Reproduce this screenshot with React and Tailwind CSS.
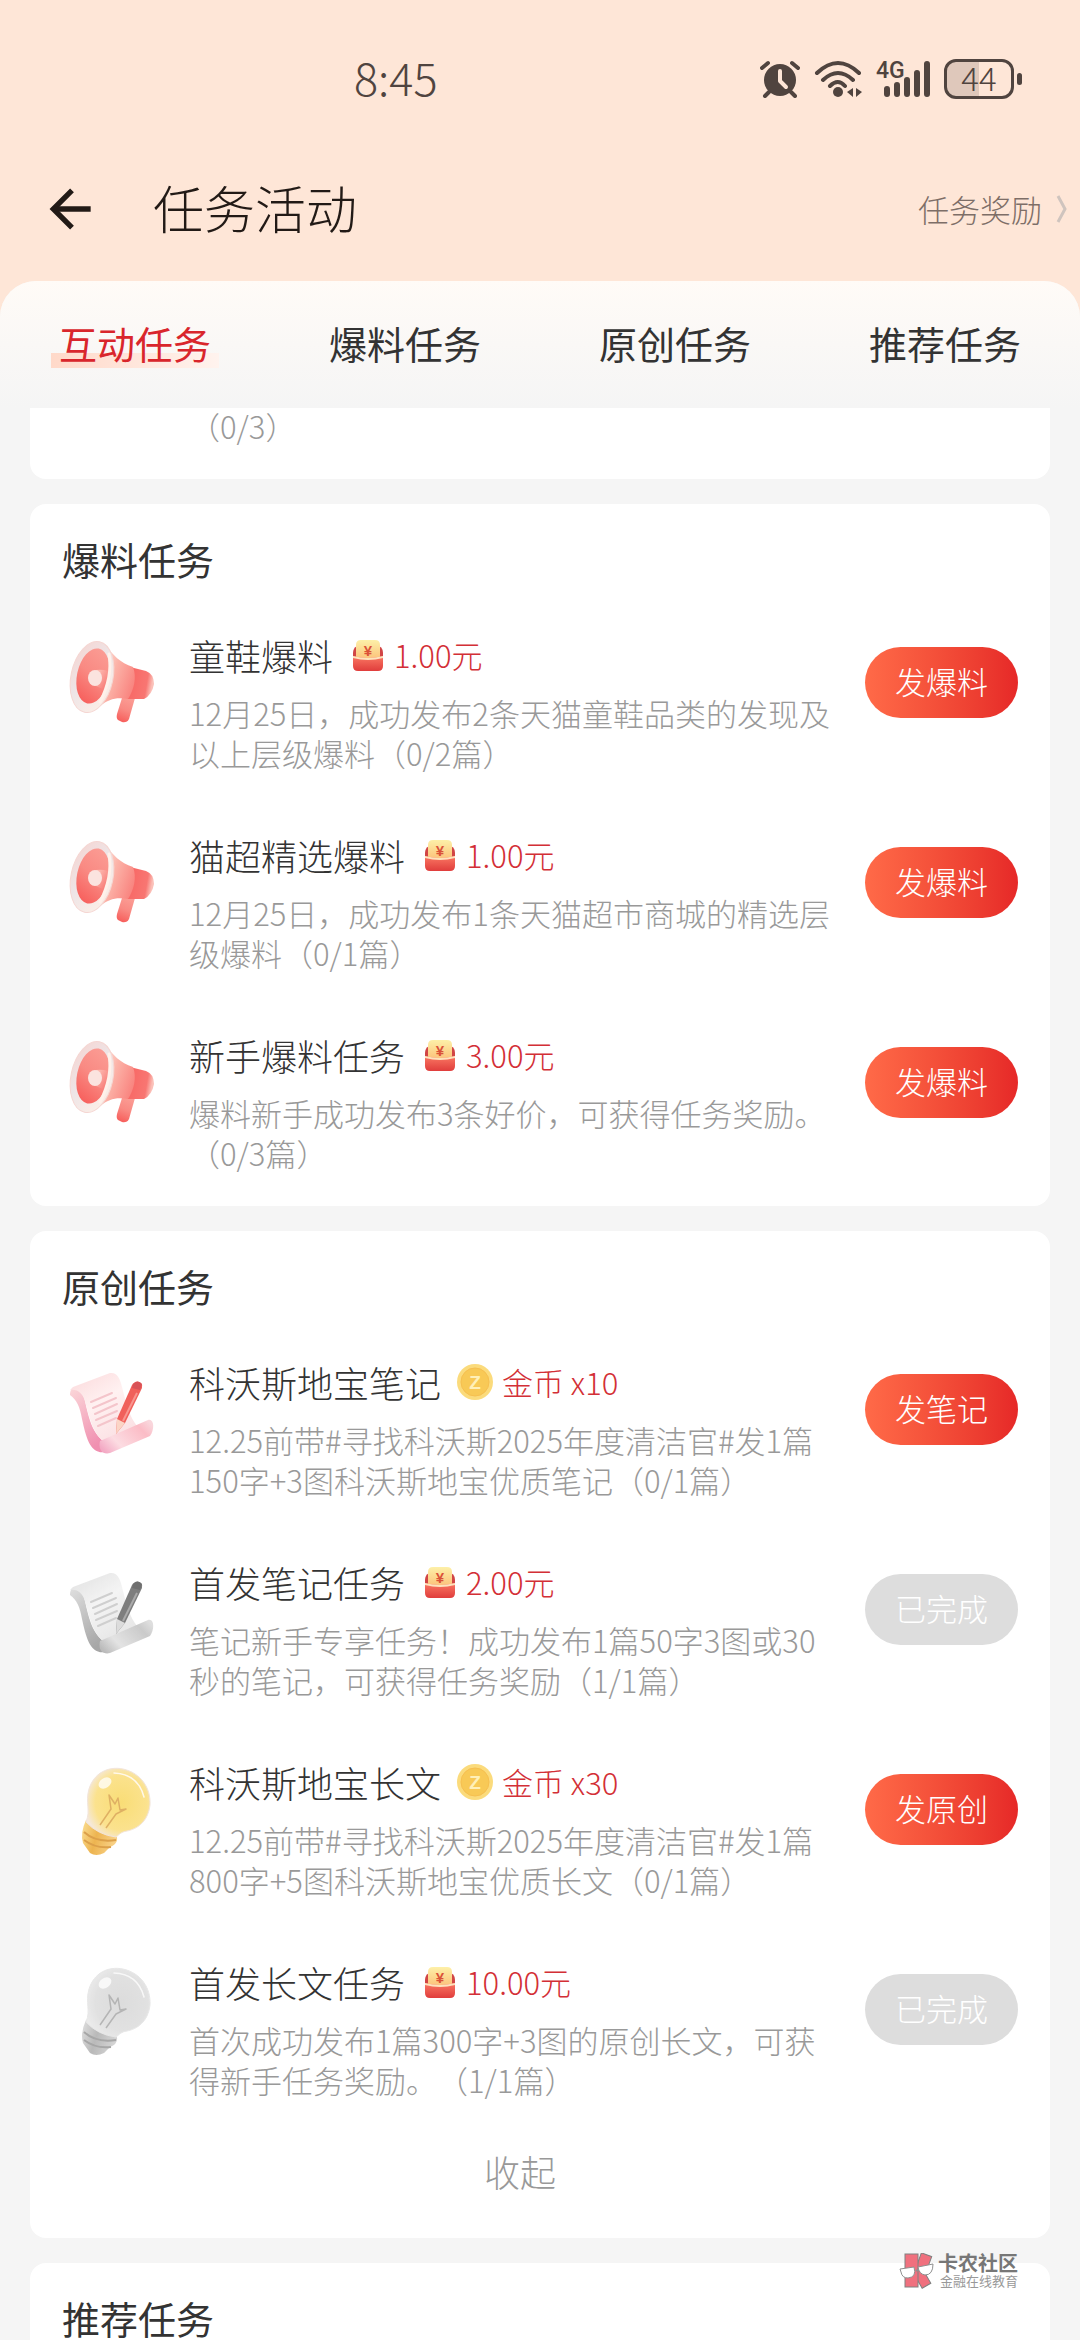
import { useState } from 'react';
import { ArrowLeft } from 'lucide-react';

const tabs = ['互动任务', '爆料任务', '原创任务', '推荐任务'];

const leakTasks = [
    { title: '童鞋爆料', icon: 'horn', reward: '1.00元', desc: '12月25日，成功发布2条天猫童鞋品类的发现及以上层级爆料（0/2篇）', action: '发爆料' },
    { title: '猫超精选爆料', icon: 'horn', reward: '1.00元', desc: '12月25日，成功发布1条天猫超市商城的精选层级爆料（0/1篇）', action: '发爆料' },
    { title: '新手爆料任务', icon: 'horn', reward: '3.00元', desc: '爆料新手成功发布3条好价，可获得任务奖励。（0/3篇）', action: '发爆料' },
];

const originalTasks = [
    { title: '科沃斯地宝笔记', icon: 'note', coin: true, reward: '金币 x10', desc: '12.25前带#寻找科沃斯2025年度清洁官#发1篇150字+3图科沃斯地宝优质笔记（0/1篇）', action: '发笔记' },
    { title: '首发笔记任务', icon: 'note', done: true, reward: '2.00元', desc: '笔记新手专享任务！成功发布1篇50字3图或30秒的笔记，可获得任务奖励（1/1篇）' },
    { title: '科沃斯地宝长文', icon: 'bulb', coin: true, reward: '金币 x30', desc: '12.25前带#寻找科沃斯2025年度清洁官#发1篇800字+5图科沃斯地宝优质长文（0/1篇）', action: '发原创' },
    { title: '首发长文任务', icon: 'bulb', done: true, reward: '10.00元', desc: '首次成功发布1篇300字+3图的原创长文，可获得新手任务奖励。（1/1篇）' },
];

const Horn = () => (
    <svg viewBox="0 0 100 100" className="w-full h-full">
        <defs>
            <linearGradient id="hornBody" x1="0" y1="0" x2="1" y2="0.6">
                <stop offset="0" stopColor="#fff0ea" />
                <stop offset="0.5" stopColor="#fcb3a8" />
                <stop offset="1" stopColor="#f98580" />
            </linearGradient>
            <linearGradient id="hornCup" x1="0.7" y1="0" x2="0.4" y2="1">
                <stop offset="0" stopColor="#fb9c94" />
                <stop offset="0.5" stopColor="#f98a83" />
                <stop offset="1" stopColor="#f7605d" />
            </linearGradient>
            <linearGradient id="hornBack" x1="0" y1="0" x2="1" y2="0.2">
                <stop offset="0" stopColor="#f86461" />
                <stop offset="0.8" stopColor="#f87672" />
                <stop offset="1" stopColor="#fbc0b8" />
            </linearGradient>
            <linearGradient id="hornRim" x1="0" y1="0" x2="1" y2="1">
                <stop offset="0" stopColor="#f6d3cf" />
                <stop offset="0.45" stopColor="#eee5e7" />
                <stop offset="1" stopColor="#fff0e6" />
            </linearGradient>
            <linearGradient id="hornTube" x1="0" y1="0" x2="1" y2="1">
                <stop offset="0" stopColor="#fdc6bc" />
                <stop offset="1" stopColor="#f76d69" />
            </linearGradient>
        </defs>
        <path d="M60 66 L73 66 L67 87 Q65 91 60 90 L56 88 Q54 86 55 82 Z" fill="url(#hornCup)" />
        <path d="M68 35 L84 39 Q92 42 92 52 Q90 63 82 67 L65 67 Z" fill="url(#hornBack)" />
        <path d="M43 12 C51 23 58 31 71 35 C75 45 72 58 66 67 C54 65 47 67 38 74 Z" fill="url(#hornBody)" />
        <ellipse cx="30" cy="45" rx="21" ry="36" transform="rotate(12 30 45)" fill="url(#hornRim)" stroke="#f5d6d2" />
        <ellipse cx="31" cy="44" rx="16" ry="28" transform="rotate(12 31 44)" fill="url(#hornCup)" />
        <path d="M34 38 Q40 37 46 39 Q47 50 44 58 Q38 56 34 54 Z" fill="url(#hornTube)" />
        <ellipse cx="33" cy="46" rx="7" ry="8" fill="#fbe3df" />
        <path d="M47 22 Q51 45 38 70" fill="none" stroke="#fff1ea" strokeWidth="3" strokeLinecap="round" />
    </svg>
);

const Note = () => (
    <svg viewBox="0 0 100 100" className="w-full h-full">
        <defs>
            <linearGradient id="noteSheet" x1="0" y1="0" x2="0.6" y2="1">
                <stop offset="0" stopColor="#fbd8da" />
                <stop offset="0.5" stopColor="#fff1f1" />
                <stop offset="1" stopColor="#fbe1e4" />
            </linearGradient>
            <linearGradient id="noteEdge" x1="0" y1="0" x2="0.5" y2="1">
                <stop offset="0" stopColor="#fbd8da" />
                <stop offset="1" stopColor="#f08fb0" />
            </linearGradient>
            <linearGradient id="noteRoll" x1="0" y1="0.8" x2="1" y2="0.2">
                <stop offset="0" stopColor="#f3a9c4" />
                <stop offset="0.3" stopColor="#fcdce2" />
                <stop offset="0.8" stopColor="#fbbcc6" />
                <stop offset="1" stopColor="#f9d6dc" />
            </linearGradient>
        </defs>
        <path d="M8 36 C8 26 17 25 22 38 C26 54 29 78 47 85 L44 93 C28 96 24 78 20 60 C18 48 15 41 8 36 Z" fill="url(#noteEdge)" />
        <path d="M11 28 L48 14 C55 13 58 19 60 28 C65 48 68 58 75 67 L45 85 C31 77 27 57 23 42 C20 34 16 30 8 31 Z" fill="url(#noteSheet)" />
        <path d="M38 82 L86 61 C92 59 93 70 88 77 L48 94 C40 96 36 90 38 82 Z" fill="url(#noteRoll)" />
        <path d="M29 43 L50 34 M31 49 L54 39 M33 55 L55 45 M34 61 L55 52 M36 67 L54 59" stroke="#f4c5cb" strokeWidth="2" strokeLinecap="round" />
        <path d="M70 26 Q74 20 79 24 Q81 26 80 29 L63 64 L54 75 L55 60 Z" fill="#f0605b" />
        <path d="M75 34 L61 62" stroke="#f99690" strokeWidth="2" />
        <path d="M55 60 L63 64 L54 75 Z" fill="#fbd5c6" />
        <path d="M71 25 Q76 20 80 25 L78 31 L70 29 Z" fill="#d95257" />
    </svg>
);

const Bulb = () => (
    <svg viewBox="0 0 100 100" className="w-full h-full">
        <defs>
            <radialGradient id="bulbGlow" cx="0.55" cy="0.5" r="0.58">
                <stop offset="0" stopColor="#f9dd76" />
                <stop offset="0.7" stopColor="#fbe28e" />
                <stop offset="1" stopColor="#f5e9de" />
            </radialGradient>
            <linearGradient id="bulbBase" x1="0" y1="0" x2="1" y2="0.3">
                <stop offset="0" stopColor="#fbdf93" />
                <stop offset="0.5" stopColor="#edb450" />
                <stop offset="1" stopColor="#f8d084" />
            </linearGradient>
        </defs>
        <path d="M24 61 L54 75 Q58 84 48 88 L42 94 Q34 98 28 94 L21 84 Q18 74 24 61 Z" fill="url(#bulbBase)" />
        <path d="M24 63 C29 51 23 44 27 30 C32 14 46 7 61 10 C79 14 89 29 88 46 C86 63 75 70 65 72 C59 73 58 75 54 78 Q36 76 24 63 Z" fill="url(#bulbGlow)" stroke="#f2e5db" />
        <path d="M22 73 Q34 84 54 81 M22 81 Q34 90 49 88" fill="none" stroke="#dca04a" strokeWidth="2" />
        <path d="M38 66 L49 50 L47 36 L53 45 L56 39 L58 51 L64 50 L54 55 L44 69" fill="none" stroke="#dfb064" strokeWidth="1.5" strokeLinejoin="round" />
        <ellipse cx="43" cy="24" rx="7" ry="5" transform="rotate(-35 43 24)" fill="#ffffff" fillOpacity="0.75" />
        <path d="M52 14 Q76 15 82 38" fill="none" stroke="#fff8ea" strokeWidth="1.5" strokeLinecap="round" />
    </svg>
);

const icons = { horn: Horn, note: Note, bulb: Bulb };

const RedPacket = () => (
    <svg viewBox="0 0 36 36" className="w-9 h-9 shrink-0">
        <defs>
            <linearGradient id="packetFront" x1="0" y1="0" x2="0" y2="1">
                <stop offset="0" stopColor="#fa7863" />
                <stop offset="1" stopColor="#e03d3c" />
            </linearGradient>
            <linearGradient id="packetCard" x1="0" y1="0" x2="0" y2="1">
                <stop offset="0" stopColor="#fdf0a8" />
                <stop offset="1" stopColor="#fcc27a" />
            </linearGradient>
        </defs>
        <path d="M4 22 V16 Q4 11 8 9 H30 Q34 11 34 16 V22 Z" fill="#d14545" />
        <path d="M7 22 V8 Q7 3 12 3 H26 Q31 3 31 8 V22 Z" fill="url(#packetCard)" />
        <path d="M4 19 Q19 23 34 19 V29 Q34 34 29 34 H9 Q4 34 4 29 Z" fill="url(#packetFront)" />
        <path d="M4 19 Q19 23 34 19 V21 Q19 25 4 21 Z" fill="#fde3bd" />
        <text x="19" y="19" textAnchor="middle" fontSize="15" fontWeight="700" fontFamily="Liberation Sans, sans-serif" fill="#db5138">¥</text>
    </svg>
);

const Coin = () => (
    <svg viewBox="0 0 36 36" className="w-9 h-9 shrink-0">
        <circle cx="18" cy="18" r="18" fill="#fbdb7c" />
        <circle cx="18" cy="18" r="14" fill="#f8c956" stroke="#f6bf50" />
        <text x="18" y="25" textAnchor="middle" fontSize="19" fontWeight="700" fontFamily="Liberation Sans, sans-serif" fill="#fff0b8">Z</text>
    </svg>
);

const StatusBar = () => (
    <div className="flex items-center justify-between h-[157px] pl-[354px] pr-[58px] text-[#50443f]">
        <span className="pb-1 text-[45px] leading-[50px] font-light">8:45</span>
        <div className="flex items-center gap-[14px]">
            <svg viewBox="0 0 40 38" className="w-10 h-[38px]">
                <circle cx="20" cy="20" r="16" fill="currentColor" />
                <path d="M2 8 L8 3 M32 3 L38 8 M9 32 L5 36 M31 32 L35 36" stroke="currentColor" strokeWidth="4" strokeLinecap="round" />
                <path d="M20 11 V21 L26 27" fill="none" stroke="#fee6d7" strokeWidth="4" strokeLinecap="round" strokeLinejoin="round" />
            </svg>
            <svg viewBox="0 0 48 38" className="w-12 h-[38px]">
                <path d="M3 13 Q24 -7 45 13 M9 20 Q24 6 39 20 M16 26 Q24 18 31 26" fill="none" stroke="currentColor" strokeWidth="4" strokeLinecap="round" />
                <circle cx="24" cy="32" r="5" fill="currentColor" />
                <path d="M39 28 V37 L33 32 Z M42 28 L48 32 L42 37 Z" fill="currentColor" />
            </svg>
            <svg viewBox="0 0 54 38" className="w-[54px] h-[38px]">
                <text x="0" y="18" fontSize="23" fontWeight="500" fontFamily="Roboto, sans-serif" fill="currentColor">4G</text>
                <path d="M11 29 V34 M21 25 V34 M31 20 V34 M41 13 V34 M51 4 V34" stroke="currentColor" strokeWidth="6" strokeLinecap="round" />
            </svg>
            <div className="flex items-center gap-[3px]">
                <div className="flex items-center justify-center w-[70px] h-10 pb-[3px] rounded-xl border-[3px] border-current bg-linear-to-r from-[#dfc8bb] from-50% to-transparent to-50% text-[33px] leading-[34px] font-light">44</div>
                <div className="w-[5px] h-3 rounded-full bg-current" />
            </div>
        </div>
    </div>
);

const TaskRow = ({ task }) => {
    const Icon = icons[task.icon];

    return (
        <li className="flex items-start gap-[27px]">
            <div className={`w-[100px] h-[100px] mt-[2px] shrink-0 ${task.done ? 'grayscale' : ''}`}>
                <Icon />
            </div>
            <div className="flex-1 min-w-0">
                <div className="flex items-center h-[50px]">
                    <h3 className="text-[36px] leading-[50px] font-light text-[#333333]">{task.title}</h3>
                    <div className="flex items-center gap-[9px] ml-4 text-[31px] leading-[50px] font-light text-[#d32f36]">
                        {task.coin ? <Coin /> : <RedPacket />}
                        <span>{task.reward}</span>
                    </div>
                </div>
                <p className="mt-[13px] text-[31px] leading-10 font-light text-[#999999]">{task.desc}</p>
            </div>
            <button
                disabled={task.done}
                className={`w-[153px] h-[71px] mt-[17px] pb-[3px] shrink-0 rounded-full text-[31px] font-light text-white ${task.done ? 'bg-[#dddddd]' : 'bg-linear-to-r from-[#ff6a48] to-[#e62828]'
                    }`}
            >
                {task.done ? '已完成' : task.action}
            </button>
        </li>
    );
};

const Card = ({ title, tasks, children }) => (
    <section className="bg-white rounded-2xl px-8 pt-[30px] pb-[33px]">
        <h2 className="text-[38px] leading-[50px] font-normal text-[#333333]">{title}</h2>
        <ul className="flex flex-col gap-[57px] mt-[46px]">
            {tasks.map((task) => (
                <TaskRow key={task.title} task={task} />
            ))}
        </ul>
        {children}
    </section>
);

const Watermark = () => (
    <div className="absolute right-[62px] bottom-[51px] flex items-center gap-[3px]">
        <svg viewBox="0 0 36 36" className="w-9 h-9">
            <g fill="#f0707e" stroke="#808080">
                <rect x="19" y="1" width="11" height="19" transform="rotate(20 24 10)" />
                <rect x="18" y="16" width="10" height="18" transform="rotate(-30 23 25)" />
                <rect x="6" y="1" width="13" height="33" />
            </g>
            <path d="M17 18 L20 16" stroke="#909090" strokeWidth="2" />
            <path d="M1 16 L15 14 Q18 24 9 25 Q3 25 2 19 Z" fill="#ffffff" stroke="#909090" />
            <path d="M19 14 L34 11 Q34 22 26 22 Q20 21 19 14 Z" fill="#ffffff" stroke="#909090" />
        </svg>
        <div className="flex flex-col items-end">
            <span className="text-[20px] leading-5 font-bold text-[#777777]">卡农社区</span>
            <span className="text-[13px] leading-4 text-[#999999]">金融在线教育</span>
        </div>
    </div>
);

export default function App() {
    const [active, setActive] = useState(0);

    return (
        <div className="relative flex flex-col h-screen overflow-hidden bg-[#fee6d7] font-['Noto_Sans_CJK_SC',sans-serif] [text-spacing-trim:space-all]">
            <StatusBar />
            <header className="flex items-center justify-between h-[124px] shrink-0 pl-10 pr-3 pb-5">
                <div className="flex items-center gap-[49px]">
                    <button aria-label="返回">
                        <ArrowLeft className="w-16 h-16 text-[#221a16]" strokeWidth={2} strokeLinecap="butt" strokeLinejoin="miter" />
                    </button>
                    <h1 className="pb-1 text-[51px] leading-[60px] font-light text-[#221a16]">任务活动</h1>
                </div>
                <a href="#rewards" className="flex items-center gap-[14px] text-[31px] leading-10 font-light text-[#7d6e67]">
                    任务奖励
                    <svg viewBox="0 0 12 28" className="w-3 h-7">
                        <path d="M2 1 L9 14 L2 27" fill="none" stroke="#cfc4be" strokeWidth="3" />
                    </svg>
                </a>
            </header>
            <div className="flex flex-col flex-1 min-h-0 rounded-t-[36px] bg-[#f5f5f5] overflow-hidden">
                <nav className="grid grid-cols-4 h-[127px] pb-[3px] shrink-0 bg-linear-to-b from-[#fffbf7] to-[#f5f5f5]">
                    {tabs.map((tab, i) => (
                        <button
                            key={tab}
                            onClick={() => setActive(i)}
                            className={`flex items-center justify-center text-[38px] leading-[50px] ${active === i ? 'text-[#d9262c]' : 'text-[#333333]'}`}
                        >
                            <span className={active === i ? 'px-2 bg-linear-to-r from-[#ffd9c9] to-[#fff3ee] bg-[length:100%_15px] bg-bottom bg-no-repeat' : 'px-2'}>{tab}</span>
                        </button>
                    ))}
                </nav>
                <main className="flex flex-col gap-[25px] flex-1 min-h-0 px-[30px] overflow-hidden [&>*]:shrink-0">
                    <section className="bg-white rounded-b-2xl pl-[159px] pb-[35px]">
                        <p className="text-[31px] leading-9 font-light text-[#999999]">（0/3）</p>
                    </section>
                    <Card title="爆料任务" tasks={leakTasks} />
                    <Card title="原创任务" tasks={originalTasks}>
                        <button className="block w-full h-[69px] mt-9 pr-10 text-[36px] font-light text-[#999999]">收起</button>
                    </Card>
                    <Card title="推荐任务" tasks={[]} />
                </main>
            </div>
            <Watermark />
        </div>
    );
}
